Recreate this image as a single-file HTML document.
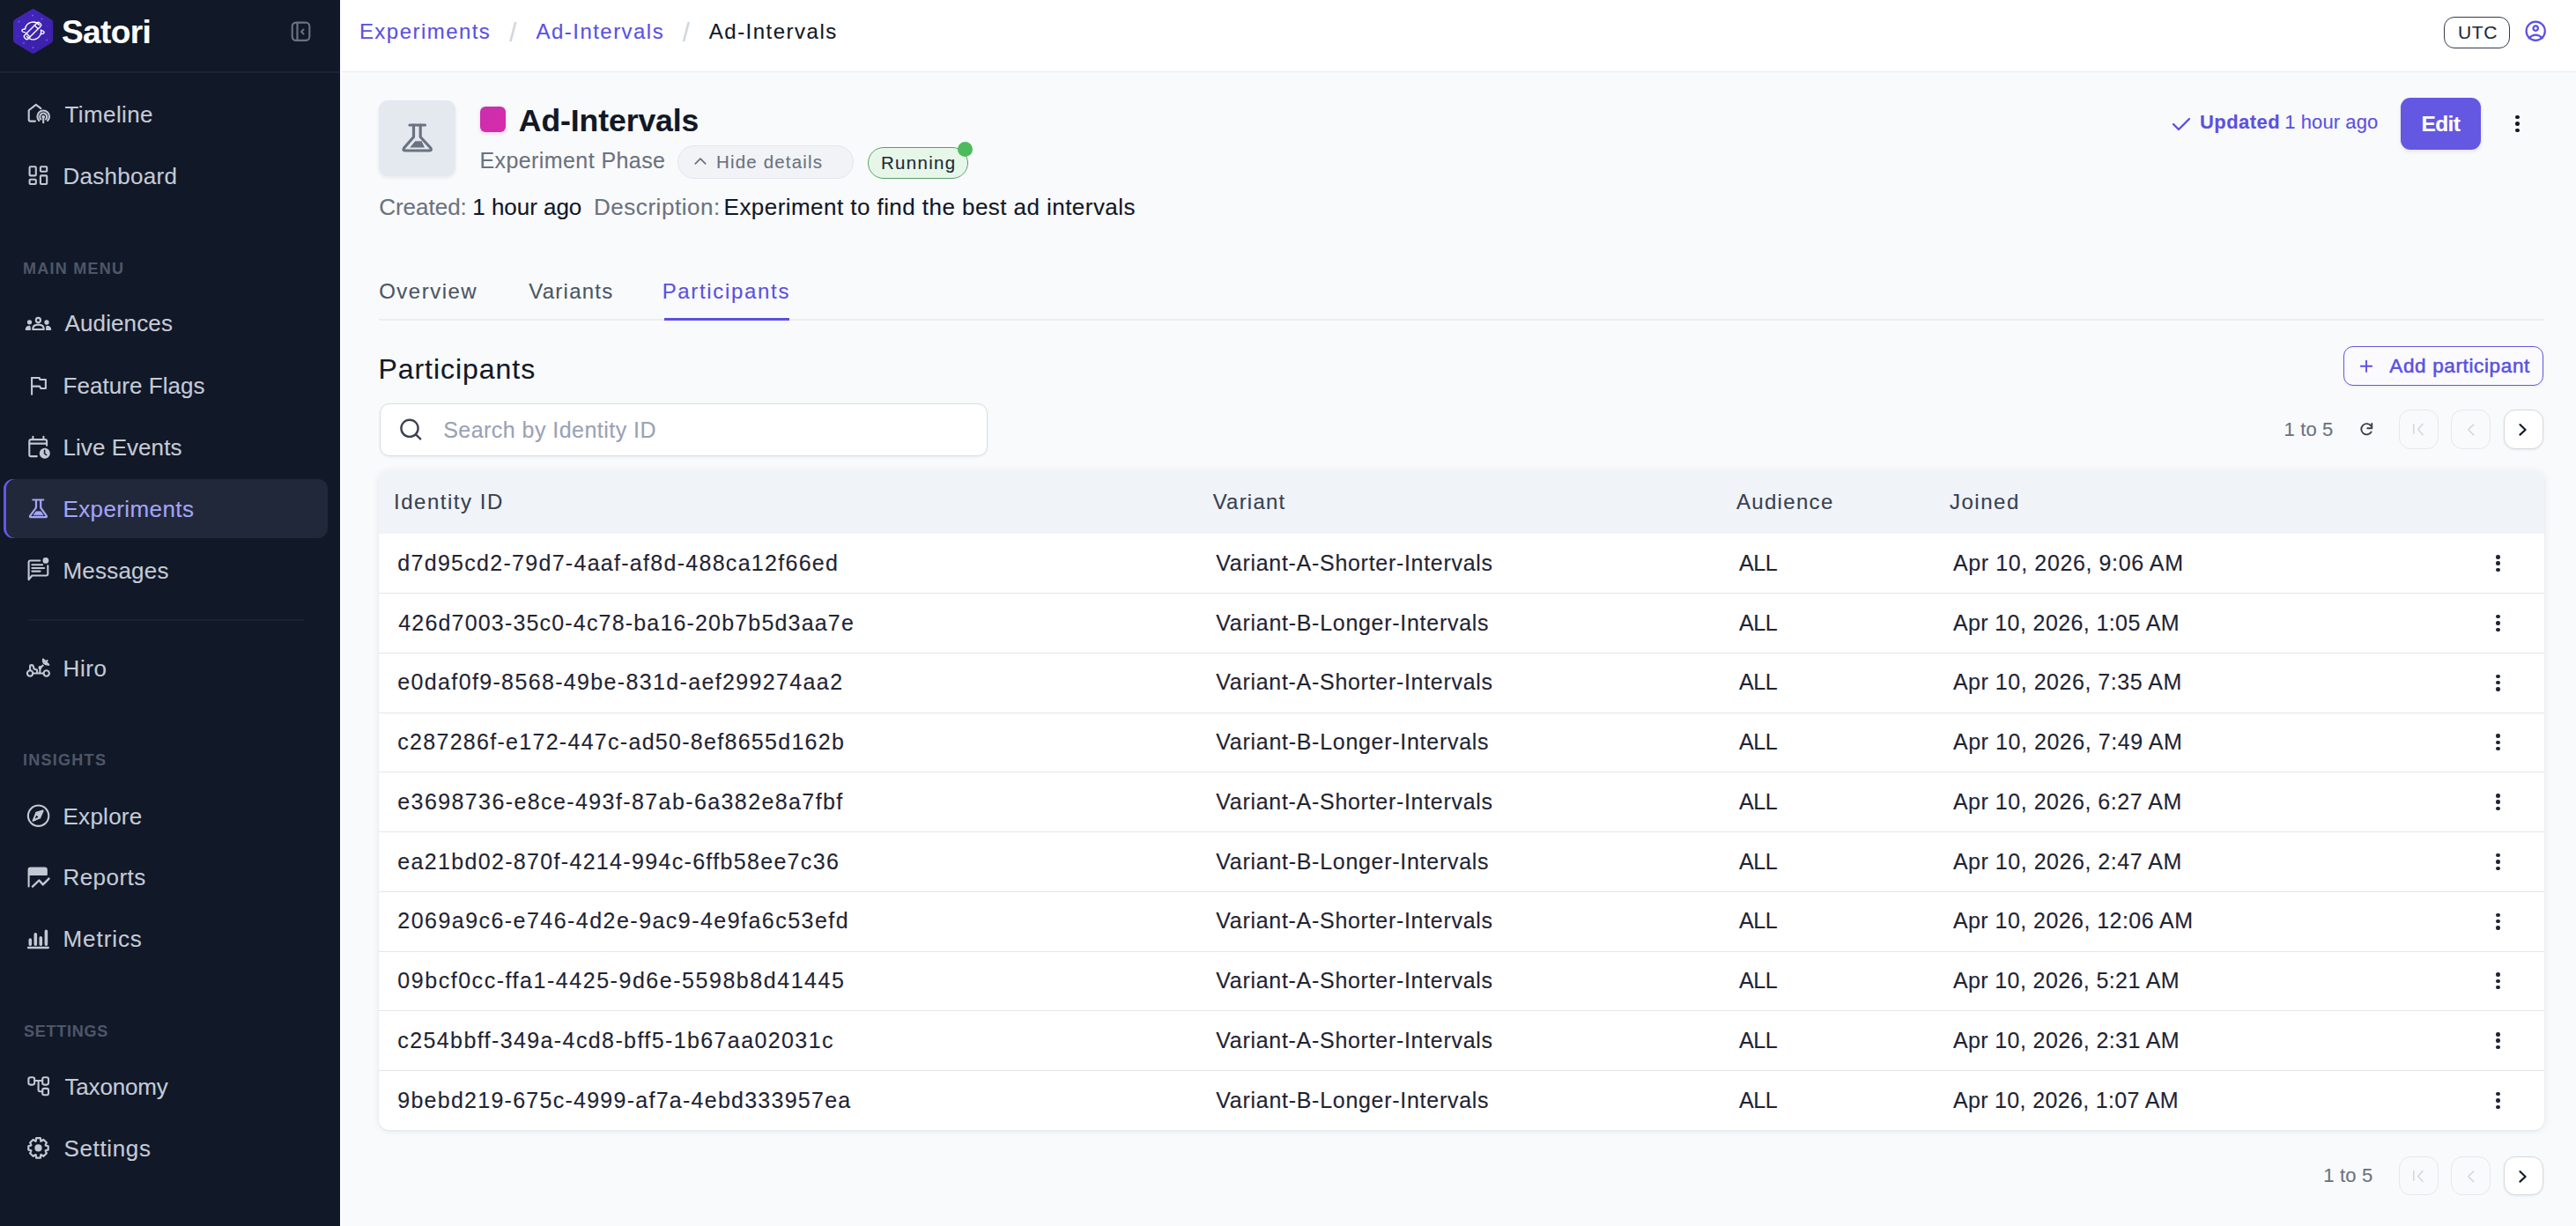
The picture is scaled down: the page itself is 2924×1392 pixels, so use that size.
<!DOCTYPE html>
<html><head><meta charset="utf-8"><title>Satori - Ad-Intervals</title>
<style>
html,body{margin:0;padding:0;width:2924px;height:1392px;overflow:hidden;background:#f9fafb}
body{position:relative;font-family:"Liberation Sans",sans-serif}
.a{position:absolute}
.t{position:absolute;white-space:nowrap;-webkit-text-stroke:0.12px currentColor}
svg{position:absolute;overflow:visible}
</style></head><body>
<div class="a" style="left:0px;top:0px;width:386px;height:1392px;background:#111827"></div>
<div class="a" style="left:0px;top:81px;width:386px;height:2px;background:#1b2232"></div>
<svg style="left:14px;top:9px;" width="47" height="53" viewBox="0 0 47 53"><defs><linearGradient id="hg" x1="0" y1="0" x2="1" y2="1"><stop offset="0" stop-color="#4427bd"/><stop offset="1" stop-color="#3a1fa6"/></linearGradient></defs><path d="M21.4 1.9 Q23.6 0.6 25.8 1.9 L44.1 13 Q46.2 14.3 46.2 16.8 L46.2 36.2 Q46.2 38.7 44.1 40 L25.8 51.1 Q23.6 52.4 21.4 51.1 L3.1 40 Q1 38.7 1 36.2 L1 16.8 Q1 14.3 3.1 13 Z" fill="url(#hg)"/><g fill="#7f62f2" opacity=".85"><circle cx="23" cy="8.5" r="1.1"/><circle cx="33.5" cy="12.5" r="1"/><circle cx="7.5" cy="15.5" r="1"/><circle cx="39" cy="36.5" r="1"/><circle cx="13" cy="40" r="1"/><circle cx="23.5" cy="45" r="1.1"/><circle cx="40" cy="21" r="0.6"/><circle cx="6" cy="32" r="0.6"/></g><g fill="none" stroke="#fff" stroke-width="1.35" stroke-linejoin="round" stroke-linecap="round"><path d="M14.6 23.5 A9.2 9.2 0 0 1 30.5 19.2 M32.6 25 A9.2 9.2 0 0 1 16.2 32.2"/><path d="M14.6 24 C10 23.5 9.5 27.5 14.8 27.8 M32.4 25.6 C37.5 26 37.2 30 32.2 29.4"/><g transform="translate(23 26) rotate(-45)"><rect x="-12" y="-2.8" width="24" height="5.6" rx="2"/><path d="M6 -2.8 V2.8 M-7 -2.8 V2.8"/></g></g></svg>
<div class="t" style="left:70.00px;top:17.68px;font-size:37px;line-height:37px;color:#ffffff;font-weight:700;letter-spacing:-0.600px;">Satori</div>
<svg style="left:330px;top:23.5px;" width="23" height="24" viewBox="0 0 23 24"><rect x="1.7" y="1.6" width="19.6" height="20.3" rx="4.3" fill="none" stroke="#6b7280" stroke-width="2.1"/><path d="M7.5 1.5 V22.5" stroke="#6b7280" stroke-width="2.2"/><path d="M14.5 9.5 L12 12 L14.5 14.5" fill="none" stroke="#6b7280" stroke-width="2" stroke-linecap="round" stroke-linejoin="round"/></svg>
<div class="a" style="left:4px;top:544px;width:368px;height:67px;background:#212839;border-radius:11px;box-shadow:inset 3px 0 0 #6457e6"></div>
<svg style="left:24px;top:110px;" width="40" height="40" viewBox="0 0 40 40"><g fill="none" stroke="#c2c8d4" stroke-width="2.1" stroke-linecap="round" stroke-linejoin="round"><path d="M16 27.6 H10.6 Q8.7 27.6 8.7 25.7 V15.3 L16.8 8.9 L22.4 13.1"/><path d="M25.2 22.8 V29.3"/><path d="M20.3 27 A6.8 6.8 0 1 1 30.1 27"/><path d="M22.4 25.4 A4 4 0 1 1 28 25.4"/><circle cx="25.2" cy="22.6" r="0.9" fill="#c2c8d4"/></g></svg>
<div class="t" style="left:73.50px;top:117.19px;font-size:26px;line-height:26px;color:#c4cad6;font-weight:400;letter-spacing:0.400px;">Timeline</div>
<svg style="left:24px;top:180px;" width="40" height="40" viewBox="0 0 40 40"><g fill="none" stroke="#c2c8d4" stroke-width="2.1" stroke-linecap="round" stroke-linejoin="round"><rect x="9.6" y="9.3" width="7.2" height="10.1" rx="1"/><rect x="21.9" y="9.3" width="7.3" height="5.4" rx="1"/><rect x="9.6" y="23.8" width="7.2" height="5.2" rx="1"/><rect x="21.9" y="19.4" width="7.3" height="9.6" rx="1"/></g></svg>
<div class="t" style="left:71.50px;top:187.19px;font-size:26px;line-height:26px;color:#c4cad6;font-weight:400;letter-spacing:0.275px;">Dashboard</div>
<svg style="left:24px;top:350px;" width="40" height="40" viewBox="0 0 40 40"><g fill="none" stroke="#c2c8d4" stroke-width="2.1" stroke-linecap="round" stroke-linejoin="round"><circle cx="19.4" cy="13.5" r="2.6"/><path d="M13.2 24 Q13.2 18.6 19.5 18.6 Q25.8 18.6 25.8 24 Z"/><circle cx="9.5" cy="15.8" r="1.6" fill="#c2c8d4"/><circle cx="29" cy="16" r="1.6" fill="#c2c8d4"/><path d="M5.3 24.3 Q5.3 20.5 9.8 20.3 L10.3 24.3 Z" fill="#c2c8d4" stroke-width="1.2"/><path d="M33.6 24.3 Q33.6 20.5 29 20.3 L28.6 24.3 Z" fill="#c2c8d4" stroke-width="1.2"/></g></svg>
<div class="t" style="left:73.50px;top:354.19px;font-size:26px;line-height:26px;color:#c4cad6;font-weight:400;letter-spacing:0.125px;">Audiences</div>
<svg style="left:24px;top:420px;" width="40" height="40" viewBox="0 0 40 40"><g fill="none" stroke="#c2c8d4" stroke-width="2.1" stroke-linecap="round" stroke-linejoin="round"><path d="M12.1 27.8 V9"/><path d="M12.1 9 H20.8 L21.3 11 H27.9 V21 H22.3 L21.2 18.6 H12.1"/></g></svg>
<div class="t" style="left:71.50px;top:424.59px;font-size:26px;line-height:26px;color:#c4cad6;font-weight:400;letter-spacing:0.058px;">Feature Flags</div>
<svg style="left:24px;top:490px;" width="40" height="40" viewBox="0 0 40 40"><g fill="none" stroke="#c2c8d4" stroke-width="2.1" stroke-linecap="round" stroke-linejoin="round"><path d="M17.8 28.1 H11.2 Q9.3 28.1 9.3 26.2 V11 Q9.3 9.1 11.2 9.1 H27.2 Q29.1 9.1 29.1 11 V15.8"/><path d="M13.4 5.8 V9 M25.4 5.8 V9 M9.5 13.6 H29"/><circle cx="26.8" cy="24.8" r="6" fill="#c2c8d4" stroke="none"/><path d="M26.6 21.3 V24.9 L28.6 26.5" stroke="#111827" stroke-width="1.6"/></g></svg>
<div class="t" style="left:71.50px;top:494.99px;font-size:26px;line-height:26px;color:#c4cad6;font-weight:400;letter-spacing:0.050px;">Live Events</div>
<svg style="left:24px;top:560px;" width="40" height="40" viewBox="0 0 40 40"><g fill="none" stroke="#a5a6f6" stroke-width="2.2" stroke-linecap="round" stroke-linejoin="round"><path d="M13.4 7.5 H25.3 M17 7.5 V16.3 L10.2 25.6 Q9.3 27.1 11 27.1 H28 Q29.6 27.1 28.7 25.6 L22.2 16.3 V7.5"/><path d="M14.4 24.5 L16.9 20.9 H22.3 L24.8 24.5 Z" fill="#a5a6f6" stroke-width="1"/></g></svg>
<div class="t" style="left:71.40px;top:564.99px;font-size:26px;line-height:26px;color:#a5a3f5;font-weight:400;letter-spacing:0.400px;">Experiments</div>
<svg style="left:24px;top:630px;" width="40" height="40" viewBox="0 0 40 40"><g fill="none" stroke="#c2c8d4" stroke-width="2.1" stroke-linecap="round" stroke-linejoin="round"><path d="M21.3 6.5 H10.6 Q8.6 6.5 8.6 8.5 V28.2 L12.4 23.5 H28.4 Q30.3 23.5 30.3 21.6 V12.3"/><path d="M12.4 11.3 H24.2 M12.4 15 H26.1 M12.4 18.6 H21.6"/><circle cx="27.9" cy="6.4" r="3.4" fill="#c2c8d4" stroke="none"/></g></svg>
<div class="t" style="left:71.50px;top:635.19px;font-size:26px;line-height:26px;color:#c4cad6;font-weight:400;letter-spacing:0.200px;">Messages</div>
<svg style="left:24px;top:740px;" width="40" height="40" viewBox="0 0 40 40"><g fill="none" stroke="#c2c8d4" stroke-width="2.1" stroke-linecap="round" stroke-linejoin="round"><circle cx="10.1" cy="24.5" r="3.2"/><circle cx="28.7" cy="24.5" r="3.2"/><path d="M13.3 24.5 H25.5"/><path d="M10.1 21.3 V16.4 Q10.1 15.1 11.9 15.1 Q13.6 15.1 13.9 16.4 L14.6 19.6 L17.9 20.5 L18.3 24"/><path d="M21.3 24.3 L21.5 18.3 L24.6 15.6"/><circle cx="21.5" cy="18.1" r="1" fill="#c2c8d4"/><path d="M25 8.6 Q23.6 14.2 31.3 14.8 Z"/><path d="M27.4 12.1 L29.6 10"/></g></svg>
<div class="t" style="left:71.50px;top:746.29px;font-size:26px;line-height:26px;color:#c4cad6;font-weight:400;letter-spacing:0.600px;">Hiro</div>
<svg style="left:24px;top:906px;" width="40" height="40" viewBox="0 0 40 40"><g fill="none" stroke="#c2c8d4" stroke-width="2.1" stroke-linecap="round" stroke-linejoin="round"><circle cx="19.6" cy="20.2" r="11.7"/><path d="M17.3 16.8 L24.6 14.6 L21.2 22.3 Z" fill="#c2c8d4"/><path d="M17.3 16.8 L13.6 25.8 L21.2 22.3 Z"/></g></svg>
<div class="t" style="left:71.50px;top:913.79px;font-size:26px;line-height:26px;color:#c4cad6;font-weight:400;letter-spacing:0.267px;">Explore</div>
<svg style="left:24px;top:976px;" width="40" height="40" viewBox="0 0 40 40"><g fill="none" stroke="#c2c8d4" stroke-width="2.1" stroke-linecap="round" stroke-linejoin="round"><path d="M8.6 30.5 V11.5 Q8.6 9.6 10.5 9.6 H26.9 Q28.8 9.6 28.8 11.5 V16.9 H8.6" fill="#c2c8d4"/><path d="M13 30.6 L20.4 23.5 L24.8 28.4 L31.5 21.6" stroke-width="2.4"/></g></svg>
<div class="t" style="left:71.50px;top:983.19px;font-size:26px;line-height:26px;color:#c4cad6;font-weight:400;letter-spacing:0.433px;">Reports</div>
<svg style="left:24px;top:1046px;" width="40" height="40" viewBox="0 0 40 40"><g fill="none" stroke="#c2c8d4" stroke-width="2.1" stroke-linecap="round" stroke-linejoin="round"><path d="M10.3 21 V26.3 M16.3 14.8 V26.3 M22.3 18.8 V26.3 M28.4 11.4 V26.3" stroke-width="3.6"/><path d="M8 30 H30.8" stroke-width="2.3"/></g></svg>
<div class="t" style="left:71.50px;top:1052.99px;font-size:26px;line-height:26px;color:#c4cad6;font-weight:400;letter-spacing:0.933px;">Metrics</div>
<svg style="left:24px;top:1214px;" width="40" height="40" viewBox="0 0 40 40"><g fill="none" stroke="#c2c8d4" stroke-width="2.1" stroke-linecap="round" stroke-linejoin="round"><rect x="8.4" y="9.3" width="6.8" height="8.3" rx="2"/><rect x="24.2" y="9.3" width="6.8" height="8.3" rx="2"/><rect x="24.2" y="21.9" width="6.8" height="7.3" rx="2"/><path d="M15.2 13 H24.2 M19.6 13 V23.3 Q19.6 25.3 21.6 25.3 H24.2"/></g></svg>
<div class="t" style="left:73.50px;top:1220.99px;font-size:26px;line-height:26px;color:#c4cad6;font-weight:400;letter-spacing:-0.186px;">Taxonomy</div>
<svg style="left:24px;top:1284px;" width="40" height="40" viewBox="0 0 40 40"><g fill="none" stroke="#c2c8d4" stroke-width="2.1" stroke-linecap="round" stroke-linejoin="round"><path d="M17.2 8.1 H21.8 L22.4 11.8 L25.4 10 L28.8 13.3 L27.6 16.4 L30.7 17.3 V21.5 L27.6 22.4 L28.8 25.5 L25.4 28.8 L22.4 27 L21.8 30.7 H17.2 L16.6 27 L13.6 28.8 L10.2 25.5 L11.4 22.4 L8.3 21.5 V17.3 L11.4 16.4 L10.2 13.3 L13.6 10 L16.6 11.8 Z" stroke-width="2.2"/><circle cx="19.5" cy="19.4" r="4.1" fill="#c2c8d4" stroke="none"/></g></svg>
<div class="t" style="left:72.50px;top:1290.69px;font-size:26px;line-height:26px;color:#c4cad6;font-weight:400;letter-spacing:0.643px;">Settings</div>
<div class="t" style="left:25.90px;top:295.96px;font-size:18px;line-height:18px;color:#4d5668;font-weight:700;letter-spacing:1.250px;">MAIN MENU</div>
<div class="t" style="left:25.90px;top:854.26px;font-size:18px;line-height:18px;color:#4d5668;font-weight:700;letter-spacing:1.286px;">INSIGHTS</div>
<div class="t" style="left:26.90px;top:1161.96px;font-size:18px;line-height:18px;color:#4d5668;font-weight:700;letter-spacing:0.757px;">SETTINGS</div>
<div class="a" style="left:32px;top:703px;width:313px;height:2px;background:#1c2333"></div>
<div class="a" style="left:386px;top:0px;width:2538px;height:81px;background:#ffffff"></div>
<div class="a" style="left:386px;top:81px;width:2538px;height:1px;background:#e9ebee"></div>
<div class="t" style="left:407.90px;top:24.38px;font-size:24px;line-height:24px;color:#5b50e3;font-weight:400;letter-spacing:1.460px;">Experiments</div>
<div class="t" style="left:578.30px;top:22.95px;font-size:29px;line-height:29px;color:#d1d5db;font-weight:400;letter-spacing:0.000px;">/</div>
<div class="t" style="left:608.60px;top:24.38px;font-size:24px;line-height:24px;color:#5b50e3;font-weight:400;letter-spacing:1.455px;">Ad-Intervals</div>
<div class="t" style="left:774.80px;top:22.95px;font-size:29px;line-height:29px;color:#d1d5db;font-weight:400;letter-spacing:0.000px;">/</div>
<div class="t" style="left:804.80px;top:24.38px;font-size:24px;line-height:24px;color:#111827;font-weight:400;letter-spacing:1.491px;">Ad-Intervals</div>
<div class="a" style="left:2774px;top:19px;width:75px;height:36px;border:1.4px solid #353b47;border-radius:12px;box-sizing:border-box;background:#fff"></div>
<div class="t" style="left:2790.00px;top:26.22px;font-size:21px;line-height:21px;color:#1f2937;font-weight:400;letter-spacing:0.600px;">UTC</div>
<svg style="left:2864px;top:21px;" width="28" height="28" viewBox="0 0 28 28"><g fill="none" stroke="#5b50e3" stroke-width="2.2" stroke-linecap="round"><circle cx="14.2" cy="14.2" r="10.6"/><circle cx="14.2" cy="11.1" r="2.7"/><path d="M6.6 22.3 Q14.2 14.9 21.8 22.3"/></g></svg>
<div class="a" style="left:386px;top:0px;width:2px;height:1392px;background:#fdfdfe"></div>
<div class="a" style="left:430px;top:114px;width:87px;height:86px;background:#e4e8ef;border-radius:10px;box-shadow:0 2px 4px rgba(16,24,40,.07)"></div>
<svg style="left:425px;top:110px;" width="100" height="100" viewBox="0 0 100 100"><g fill="none" stroke="#6b7280" stroke-width="3.2" stroke-linecap="round" stroke-linejoin="round"><path d="M40 32 H57.5"/><path d="M44.5 32 V45.5 L33.6 58 Q31.8 61 34.8 61 H62.6 Q65.6 61 63.8 58 L52.2 45.5 V32"/></g><path d="M46.3 50.2 H53.6 L57 57.6 H40.2 Z" fill="#6b7280"/></svg>
<div class="a" style="left:545px;top:121px;width:29px;height:29px;background:linear-gradient(135deg,#c82fb0,#d92aa8);border-radius:6px;box-shadow:0 2px 4px rgba(200,40,160,.18)"></div>
<div class="t" style="left:588.80px;top:119.95px;font-size:35.5px;line-height:35.5px;color:#111827;font-weight:700;letter-spacing:-0.055px;">Ad-Intervals</div>
<div class="t" style="left:544.40px;top:170.14px;font-size:25px;line-height:25px;color:#6b7280;font-weight:400;letter-spacing:0.420px;">Experiment Phase</div>
<div class="a" style="left:769px;top:165px;width:200px;height:37.5px;background:#f1f3f6;border:1.5px solid #e4e7ec;border-radius:19px;box-sizing:border-box"></div>
<svg style="left:786px;top:176px;" width="18" height="14" viewBox="0 0 18 14"><path d="M3.3 9.8 L9 4.2 L14.7 9.8" fill="none" stroke="#6b7280" stroke-width="1.8" stroke-linecap="round" stroke-linejoin="round"/></svg>
<div class="t" style="left:813.00px;top:173.65px;font-size:20.5px;line-height:20.5px;color:#6b7280;font-weight:400;letter-spacing:1.164px;">Hide details</div>
<div class="a" style="left:985px;top:167px;width:114px;height:35.5px;background:#e6f7e9;border:1.3px solid #5c9e6b;border-radius:18px;box-sizing:border-box"></div>
<div class="t" style="left:1000.00px;top:174.65px;font-size:20.5px;line-height:20.5px;color:#1f2937;font-weight:400;letter-spacing:1.283px;">Running</div>
<div class="a" style="left:1086.5px;top:160.5px;width:17px;height:17px;background:#4cbb5b;border-radius:50%"></div>
<div class="t" style="left:430.20px;top:222.49px;font-size:26px;line-height:26px;color:#6b7280;font-weight:400;letter-spacing:-0.014px;">Created:</div>
<div class="t" style="left:536.30px;top:222.49px;font-size:26px;line-height:26px;color:#111827;font-weight:400;letter-spacing:-0.033px;">1 hour ago</div>
<div class="t" style="left:674.00px;top:222.49px;font-size:26px;line-height:26px;color:#6b7280;font-weight:400;letter-spacing:0.536px;">Description:</div>
<div class="t" style="left:821.60px;top:222.49px;font-size:26px;line-height:26px;color:#111827;font-weight:400;letter-spacing:0.446px;">Experiment to find the best ad intervals</div>
<svg style="left:2464px;top:131px;" width="24" height="20" viewBox="0 0 24 20"><path d="M3 10 L9 16 L21 4" fill="none" stroke="#5b50e3" stroke-width="2.4" stroke-linecap="round" stroke-linejoin="round"/></svg>
<div class="t" style="left:2497.00px;top:128.38px;font-size:22px;line-height:22px;color:#5b50e3;font-weight:700;letter-spacing:0.450px;">Updated</div>
<div class="t" style="left:2593.30px;top:128.38px;font-size:22px;line-height:22px;color:#5b50e3;font-weight:400;letter-spacing:0.078px;">1 hour ago</div>
<div class="a" style="left:2725px;top:111px;width:91px;height:59px;background:#6457e2;border-radius:11px;box-shadow:0 2px 4px rgba(16,24,40,.1)"></div>
<div class="t" style="left:2748.50px;top:128.76px;font-size:24.5px;line-height:24.5px;color:#ffffff;font-weight:700;letter-spacing:-0.633px;">Edit</div>
<div class="a" style="left:2855px;top:130.7px;width:4.6px;height:4.6px;background:#111827;border-radius:50%"></div>
<div class="a" style="left:2855px;top:138.2px;width:4.6px;height:4.6px;background:#111827;border-radius:50%"></div>
<div class="a" style="left:2855px;top:145.7px;width:4.6px;height:4.6px;background:#111827;border-radius:50%"></div>
<div class="a" style="left:430px;top:362px;width:2458px;height:2px;background:#eceef1"></div>
<div class="t" style="left:430.20px;top:318.98px;font-size:24px;line-height:24px;color:#4b5563;font-weight:400;letter-spacing:1.486px;">Overview</div>
<div class="t" style="left:600.30px;top:318.98px;font-size:24px;line-height:24px;color:#4b5563;font-weight:400;letter-spacing:1.243px;">Variants</div>
<div class="t" style="left:751.70px;top:318.98px;font-size:24px;line-height:24px;color:#5b50e3;font-weight:400;letter-spacing:1.664px;">Participants</div>
<div class="a" style="left:754px;top:361px;width:142px;height:3px;background:#5b50e3"></div>
<div class="t" style="left:429.40px;top:403.01px;font-size:32px;line-height:32px;color:#111827;font-weight:400;letter-spacing:0.964px;">Participants</div>
<div class="a" style="left:2660px;top:393px;width:227px;height:45px;border:1.5px solid #6357e2;border-radius:11px;box-sizing:border-box;background:#fbfbff;box-shadow:0 1px 3px rgba(16,24,40,.07)"></div>
<svg style="left:2677px;top:407px;" width="18" height="18" viewBox="0 0 18 18"><path d="M9 2.6 V15 M2.8 8.8 H15.2" stroke="#5b50e3" stroke-width="1.9" stroke-linecap="round"/></svg>
<div class="t" style="left:2712.30px;top:404.55px;font-size:22.5px;line-height:22.5px;color:#5b50e3;font-weight:400;letter-spacing:0.636px;-webkit-text-stroke:0.55px #5b50e3">Add participant</div>
<div class="a" style="left:430.5px;top:458px;width:690.5px;height:59.5px;background:#fff;border:1.5px solid #d9dde3;border-radius:11px;box-sizing:border-box;box-shadow:0 1px 3px rgba(16,24,40,.06)"></div>
<svg style="left:453px;top:474px;" width="28" height="28" viewBox="0 0 28 28"><g fill="none" stroke="#3d4150" stroke-width="2.4" stroke-linecap="round"><circle cx="12" cy="12.3" r="9.6"/><path d="M19.3 19.6 L24.2 24.4"/></g></svg>
<div class="t" style="left:503.20px;top:475.94px;font-size:25px;line-height:25px;color:#9aa2b4;font-weight:400;letter-spacing:0.465px;">Search by Identity ID</div>
<div class="a" style="left:2723px;top:465px;width:44.5px;height:44.5px;border:1.3px solid #e6e8ec;border-radius:13px;box-sizing:border-box"></div>
<div class="a" style="left:2782px;top:465px;width:44.5px;height:44.5px;border:1.3px solid #e6e8ec;border-radius:13px;box-sizing:border-box"></div>
<div class="a" style="left:2842px;top:465px;width:44.5px;height:44.5px;background:#fff;border:1.3px solid #d5d9df;border-radius:13px;box-sizing:border-box;box-shadow:0 1px 3px rgba(16,24,40,.08)"></div>
<svg style="left:2715px;top:458px;" width="60" height="60" viewBox="0 0 60 60"><path d="M24.8 23.8 V34.2 M35 23.5 L29.7 29.5 L35 35.5" fill="none" stroke="#d3d6dc" stroke-width="1.5" stroke-linecap="round" stroke-linejoin="round"/></svg>
<svg style="left:2775px;top:458px;" width="60" height="60" viewBox="0 0 60 60"><path d="M32.6 24.1 L26.7 29.7 L32.6 35.6" fill="none" stroke="#d3d6dc" stroke-width="1.5" stroke-linecap="round" stroke-linejoin="round"/></svg>
<svg style="left:2835px;top:458px;" width="60" height="60" viewBox="0 0 60 60"><path d="M25.4 24.1 L31.6 30 L25.4 35.6" fill="none" stroke="#111827" stroke-width="2.1" stroke-linecap="round" stroke-linejoin="round"/></svg>
<div class="t" style="left:2592.50px;top:476.58px;font-size:22px;line-height:22px;color:#6b7280;font-weight:400;letter-spacing:0.160px;">1 to 5</div>
<svg style="left:2670px;top:470px;" width="30" height="35" viewBox="0 0 30 35"><g fill="none" stroke="#3b414c" stroke-width="1.9" stroke-linecap="round" stroke-linejoin="round"><path d="M21.6 20.4 A6.1 6.1 0 1 1 21.3 13.6"/><path d="M22.3 11 V16.3 H17.2"/></g></svg>
<div class="a" style="left:430px;top:533.5px;width:2457.5px;height:749.7px;background:#fff;border-radius:12px;box-shadow:0 1px 8px rgba(16,24,40,.08),0 1px 2px rgba(16,24,40,.05);overflow:hidden"></div>
<div class="a" style="left:430px;top:533.5px;width:2457.5px;height:72.3px;background:#f0f3f8;border-radius:12px 12px 0 0"></div>
<div class="t" style="left:447.00px;top:558.28px;font-size:24px;line-height:24px;color:#374151;font-weight:400;letter-spacing:1.520px;">Identity ID</div>
<div class="t" style="left:1376.70px;top:557.98px;font-size:24px;line-height:24px;color:#374151;font-weight:400;letter-spacing:1.200px;">Variant</div>
<div class="t" style="left:1970.90px;top:557.98px;font-size:24px;line-height:24px;color:#374151;font-weight:400;letter-spacing:1.329px;">Audience</div>
<div class="t" style="left:2213.00px;top:557.98px;font-size:24px;line-height:24px;color:#374151;font-weight:400;letter-spacing:1.500px;">Joined</div>
<div class="a" style="left:430px;top:673px;width:2457.5px;height:1px;background:#e3e6ea"></div>
<div class="t" style="left:451.30px;top:626.84px;font-size:25px;line-height:25px;color:#1f2433;font-weight:400;letter-spacing:1.289px;">d7d95cd2-79d7-4aaf-af8d-488ca12f66ed</div>
<div class="t" style="left:1380.30px;top:626.84px;font-size:25px;line-height:25px;color:#1f2433;font-weight:400;letter-spacing:0.704px;">Variant-A-Shorter-Intervals</div>
<div class="t" style="left:1974.10px;top:626.84px;font-size:25px;line-height:25px;color:#1f2433;font-weight:400;letter-spacing:-0.450px;">ALL</div>
<div class="t" style="left:2216.90px;top:626.84px;font-size:25px;line-height:25px;color:#1f2433;font-weight:400;letter-spacing:0.615px;">Apr 10, 2026, 9:06 AM</div>
<div class="a" style="left:2833.3px;top:630.175px;width:4.4px;height:4.4px;background:#1f2433;border-radius:50%"></div>
<div class="a" style="left:2833.3px;top:637.4749999999999px;width:4.4px;height:4.4px;background:#1f2433;border-radius:50%"></div>
<div class="a" style="left:2833.3px;top:644.7749999999999px;width:4.4px;height:4.4px;background:#1f2433;border-radius:50%"></div>
<div class="a" style="left:430px;top:741px;width:2457.5px;height:1px;background:#e3e6ea"></div>
<div class="t" style="left:452.30px;top:694.59px;font-size:25px;line-height:25px;color:#1f2433;font-weight:400;letter-spacing:1.174px;">426d7003-35c0-4c78-ba16-20b7b5d3aa7e</div>
<div class="t" style="left:1380.30px;top:694.59px;font-size:25px;line-height:25px;color:#1f2433;font-weight:400;letter-spacing:0.716px;">Variant-B-Longer-Intervals</div>
<div class="t" style="left:1974.10px;top:694.59px;font-size:25px;line-height:25px;color:#1f2433;font-weight:400;letter-spacing:-0.450px;">ALL</div>
<div class="t" style="left:2216.90px;top:694.59px;font-size:25px;line-height:25px;color:#1f2433;font-weight:400;letter-spacing:0.395px;">Apr 10, 2026, 1:05 AM</div>
<div class="a" style="left:2833.3px;top:697.925px;width:4.4px;height:4.4px;background:#1f2433;border-radius:50%"></div>
<div class="a" style="left:2833.3px;top:705.2249999999999px;width:4.4px;height:4.4px;background:#1f2433;border-radius:50%"></div>
<div class="a" style="left:2833.3px;top:712.5249999999999px;width:4.4px;height:4.4px;background:#1f2433;border-radius:50%"></div>
<div class="a" style="left:430px;top:809px;width:2457.5px;height:1px;background:#e3e6ea"></div>
<div class="t" style="left:451.30px;top:762.34px;font-size:25px;line-height:25px;color:#1f2433;font-weight:400;letter-spacing:1.354px;">e0daf0f9-8568-49be-831d-aef299274aa2</div>
<div class="t" style="left:1380.30px;top:762.34px;font-size:25px;line-height:25px;color:#1f2433;font-weight:400;letter-spacing:0.704px;">Variant-A-Shorter-Intervals</div>
<div class="t" style="left:1974.10px;top:762.34px;font-size:25px;line-height:25px;color:#1f2433;font-weight:400;letter-spacing:-0.450px;">ALL</div>
<div class="t" style="left:2216.90px;top:762.34px;font-size:25px;line-height:25px;color:#1f2433;font-weight:400;letter-spacing:0.530px;">Apr 10, 2026, 7:35 AM</div>
<div class="a" style="left:2833.3px;top:765.675px;width:4.4px;height:4.4px;background:#1f2433;border-radius:50%"></div>
<div class="a" style="left:2833.3px;top:772.9749999999999px;width:4.4px;height:4.4px;background:#1f2433;border-radius:50%"></div>
<div class="a" style="left:2833.3px;top:780.2749999999999px;width:4.4px;height:4.4px;background:#1f2433;border-radius:50%"></div>
<div class="a" style="left:430px;top:876px;width:2457.5px;height:1px;background:#e3e6ea"></div>
<div class="t" style="left:451.30px;top:830.09px;font-size:25px;line-height:25px;color:#1f2433;font-weight:400;letter-spacing:1.289px;">c287286f-e172-447c-ad50-8ef8655d162b</div>
<div class="t" style="left:1380.30px;top:830.09px;font-size:25px;line-height:25px;color:#1f2433;font-weight:400;letter-spacing:0.716px;">Variant-B-Longer-Intervals</div>
<div class="t" style="left:1974.10px;top:830.09px;font-size:25px;line-height:25px;color:#1f2433;font-weight:400;letter-spacing:-0.450px;">ALL</div>
<div class="t" style="left:2216.90px;top:830.09px;font-size:25px;line-height:25px;color:#1f2433;font-weight:400;letter-spacing:0.560px;">Apr 10, 2026, 7:49 AM</div>
<div class="a" style="left:2833.3px;top:833.425px;width:4.4px;height:4.4px;background:#1f2433;border-radius:50%"></div>
<div class="a" style="left:2833.3px;top:840.7249999999999px;width:4.4px;height:4.4px;background:#1f2433;border-radius:50%"></div>
<div class="a" style="left:2833.3px;top:848.0249999999999px;width:4.4px;height:4.4px;background:#1f2433;border-radius:50%"></div>
<div class="a" style="left:430px;top:944px;width:2457.5px;height:1px;background:#e3e6ea"></div>
<div class="t" style="left:451.30px;top:897.84px;font-size:25px;line-height:25px;color:#1f2433;font-weight:400;letter-spacing:1.400px;">e3698736-e8ce-493f-87ab-6a382e8a7fbf</div>
<div class="t" style="left:1380.30px;top:897.84px;font-size:25px;line-height:25px;color:#1f2433;font-weight:400;letter-spacing:0.704px;">Variant-A-Shorter-Intervals</div>
<div class="t" style="left:1974.10px;top:897.84px;font-size:25px;line-height:25px;color:#1f2433;font-weight:400;letter-spacing:-0.450px;">ALL</div>
<div class="t" style="left:2216.90px;top:897.84px;font-size:25px;line-height:25px;color:#1f2433;font-weight:400;letter-spacing:0.530px;">Apr 10, 2026, 6:27 AM</div>
<div class="a" style="left:2833.3px;top:901.175px;width:4.4px;height:4.4px;background:#1f2433;border-radius:50%"></div>
<div class="a" style="left:2833.3px;top:908.4749999999999px;width:4.4px;height:4.4px;background:#1f2433;border-radius:50%"></div>
<div class="a" style="left:2833.3px;top:915.7749999999999px;width:4.4px;height:4.4px;background:#1f2433;border-radius:50%"></div>
<div class="a" style="left:430px;top:1012px;width:2457.5px;height:1px;background:#e3e6ea"></div>
<div class="t" style="left:451.30px;top:965.59px;font-size:25px;line-height:25px;color:#1f2433;font-weight:400;letter-spacing:1.326px;">ea21bd02-870f-4214-994c-6ffb58ee7c36</div>
<div class="t" style="left:1380.30px;top:965.59px;font-size:25px;line-height:25px;color:#1f2433;font-weight:400;letter-spacing:0.716px;">Variant-B-Longer-Intervals</div>
<div class="t" style="left:1974.10px;top:965.59px;font-size:25px;line-height:25px;color:#1f2433;font-weight:400;letter-spacing:-0.450px;">ALL</div>
<div class="t" style="left:2216.90px;top:965.59px;font-size:25px;line-height:25px;color:#1f2433;font-weight:400;letter-spacing:0.530px;">Apr 10, 2026, 2:47 AM</div>
<div class="a" style="left:2833.3px;top:968.925px;width:4.4px;height:4.4px;background:#1f2433;border-radius:50%"></div>
<div class="a" style="left:2833.3px;top:976.2249999999999px;width:4.4px;height:4.4px;background:#1f2433;border-radius:50%"></div>
<div class="a" style="left:2833.3px;top:983.5249999999999px;width:4.4px;height:4.4px;background:#1f2433;border-radius:50%"></div>
<div class="a" style="left:430px;top:1080px;width:2457.5px;height:1px;background:#e3e6ea"></div>
<div class="t" style="left:451.30px;top:1033.34px;font-size:25px;line-height:25px;color:#1f2433;font-weight:400;letter-spacing:1.463px;">2069a9c6-e746-4d2e-9ac9-4e9fa6c53efd</div>
<div class="t" style="left:1380.30px;top:1033.34px;font-size:25px;line-height:25px;color:#1f2433;font-weight:400;letter-spacing:0.704px;">Variant-A-Shorter-Intervals</div>
<div class="t" style="left:1974.10px;top:1033.34px;font-size:25px;line-height:25px;color:#1f2433;font-weight:400;letter-spacing:-0.450px;">ALL</div>
<div class="t" style="left:2216.90px;top:1033.34px;font-size:25px;line-height:25px;color:#1f2433;font-weight:400;letter-spacing:0.448px;">Apr 10, 2026, 12:06 AM</div>
<div class="a" style="left:2833.3px;top:1036.675px;width:4.4px;height:4.4px;background:#1f2433;border-radius:50%"></div>
<div class="a" style="left:2833.3px;top:1043.975px;width:4.4px;height:4.4px;background:#1f2433;border-radius:50%"></div>
<div class="a" style="left:2833.3px;top:1051.2749999999999px;width:4.4px;height:4.4px;background:#1f2433;border-radius:50%"></div>
<div class="a" style="left:430px;top:1147px;width:2457.5px;height:1px;background:#e3e6ea"></div>
<div class="t" style="left:451.30px;top:1101.09px;font-size:25px;line-height:25px;color:#1f2433;font-weight:400;letter-spacing:1.540px;">09bcf0cc-ffa1-4425-9d6e-5598b8d41445</div>
<div class="t" style="left:1380.30px;top:1101.09px;font-size:25px;line-height:25px;color:#1f2433;font-weight:400;letter-spacing:0.704px;">Variant-A-Shorter-Intervals</div>
<div class="t" style="left:1974.10px;top:1101.09px;font-size:25px;line-height:25px;color:#1f2433;font-weight:400;letter-spacing:-0.450px;">ALL</div>
<div class="t" style="left:2216.90px;top:1101.09px;font-size:25px;line-height:25px;color:#1f2433;font-weight:400;letter-spacing:0.395px;">Apr 10, 2026, 5:21 AM</div>
<div class="a" style="left:2833.3px;top:1104.425px;width:4.4px;height:4.4px;background:#1f2433;border-radius:50%"></div>
<div class="a" style="left:2833.3px;top:1111.725px;width:4.4px;height:4.4px;background:#1f2433;border-radius:50%"></div>
<div class="a" style="left:2833.3px;top:1119.0249999999999px;width:4.4px;height:4.4px;background:#1f2433;border-radius:50%"></div>
<div class="a" style="left:430px;top:1215px;width:2457.5px;height:1px;background:#e3e6ea"></div>
<div class="t" style="left:451.30px;top:1168.84px;font-size:25px;line-height:25px;color:#1f2433;font-weight:400;letter-spacing:1.397px;">c254bbff-349a-4cd8-bff5-1b67aa02031c</div>
<div class="t" style="left:1380.30px;top:1168.84px;font-size:25px;line-height:25px;color:#1f2433;font-weight:400;letter-spacing:0.704px;">Variant-A-Shorter-Intervals</div>
<div class="t" style="left:1974.10px;top:1168.84px;font-size:25px;line-height:25px;color:#1f2433;font-weight:400;letter-spacing:-0.450px;">ALL</div>
<div class="t" style="left:2216.90px;top:1168.84px;font-size:25px;line-height:25px;color:#1f2433;font-weight:400;letter-spacing:0.395px;">Apr 10, 2026, 2:31 AM</div>
<div class="a" style="left:2833.3px;top:1172.175px;width:4.4px;height:4.4px;background:#1f2433;border-radius:50%"></div>
<div class="a" style="left:2833.3px;top:1179.475px;width:4.4px;height:4.4px;background:#1f2433;border-radius:50%"></div>
<div class="a" style="left:2833.3px;top:1186.7749999999999px;width:4.4px;height:4.4px;background:#1f2433;border-radius:50%"></div>
<div class="t" style="left:451.30px;top:1236.59px;font-size:25px;line-height:25px;color:#1f2433;font-weight:400;letter-spacing:1.260px;">9bebd219-675c-4999-af7a-4ebd333957ea</div>
<div class="t" style="left:1380.30px;top:1236.59px;font-size:25px;line-height:25px;color:#1f2433;font-weight:400;letter-spacing:0.716px;">Variant-B-Longer-Intervals</div>
<div class="t" style="left:1974.10px;top:1236.59px;font-size:25px;line-height:25px;color:#1f2433;font-weight:400;letter-spacing:-0.450px;">ALL</div>
<div class="t" style="left:2216.90px;top:1236.59px;font-size:25px;line-height:25px;color:#1f2433;font-weight:400;letter-spacing:0.340px;">Apr 10, 2026, 1:07 AM</div>
<div class="a" style="left:2833.3px;top:1239.925px;width:4.4px;height:4.4px;background:#1f2433;border-radius:50%"></div>
<div class="a" style="left:2833.3px;top:1247.225px;width:4.4px;height:4.4px;background:#1f2433;border-radius:50%"></div>
<div class="a" style="left:2833.3px;top:1254.5249999999999px;width:4.4px;height:4.4px;background:#1f2433;border-radius:50%"></div>
<div class="a" style="left:2723px;top:1312.5px;width:44.5px;height:44.5px;border:1.3px solid #e6e8ec;border-radius:13px;box-sizing:border-box"></div>
<div class="a" style="left:2782px;top:1312.5px;width:44.5px;height:44.5px;border:1.3px solid #e6e8ec;border-radius:13px;box-sizing:border-box"></div>
<div class="a" style="left:2842px;top:1312.5px;width:44.5px;height:44.5px;background:#fff;border:1.3px solid #d5d9df;border-radius:13px;box-sizing:border-box;box-shadow:0 1px 3px rgba(16,24,40,.08)"></div>
<svg style="left:2715px;top:1305.5px;" width="60" height="60" viewBox="0 0 60 60"><path d="M24.8 23.8 V34.2 M35 23.5 L29.7 29.5 L35 35.5" fill="none" stroke="#d3d6dc" stroke-width="1.5" stroke-linecap="round" stroke-linejoin="round"/></svg>
<svg style="left:2775px;top:1305.5px;" width="60" height="60" viewBox="0 0 60 60"><path d="M32.6 24.1 L26.7 29.7 L32.6 35.6" fill="none" stroke="#d3d6dc" stroke-width="1.5" stroke-linecap="round" stroke-linejoin="round"/></svg>
<svg style="left:2835px;top:1305.5px;" width="60" height="60" viewBox="0 0 60 60"><path d="M25.4 24.1 L31.6 30 L25.4 35.6" fill="none" stroke="#111827" stroke-width="2.1" stroke-linecap="round" stroke-linejoin="round"/></svg>
<div class="t" style="left:2637.30px;top:1323.88px;font-size:22px;line-height:22px;color:#6b7280;font-weight:400;letter-spacing:0.200px;">1 to 5</div>
</body></html>
